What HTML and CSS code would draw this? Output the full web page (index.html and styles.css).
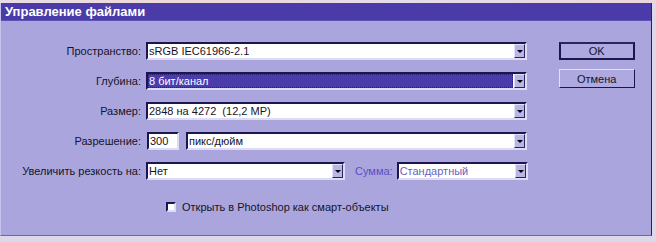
FILE: index.html
```html
<!DOCTYPE html>
<html lang="ru">
<head>
    <meta charset="UTF-8">
    <title>Управление файлами</title>
    <link rel="stylesheet" href="styles.css">
</head>
<body>
    <div class="topstrip"></div>
    <div class="window">
        <div class="titlebar">Управление файлами</div>
        <div class="content">
            <div class="form">
                <div class="row">
                    <span class="label">Пространство:</span>
                    <div class="select wide"><span class="value">sRGB IEC61966-2.1</span><span class="arrow"></span></div>
                </div>
                <div class="row">
                    <span class="label">Глубина:</span>
                    <div class="select wide active"><span class="value">8 бит/канал</span><span class="arrow"></span></div>
                </div>
                <div class="row">
                    <span class="label">Размер:</span>
                    <div class="select wide"><span class="value">2848 на 4272&nbsp; (12,2 MP)</span><span class="arrow"></span></div>
                </div>
                <div class="row">
                    <span class="label">Разрешение:</span>
                    <div class="field">300</div>
                    <div class="select units"><span class="value">пикс/дюйм</span><span class="arrow"></span></div>
                </div>
                <div class="row">
                    <span class="label">Увеличить резкость на:</span>
                    <div class="select sharpen"><span class="value">Нет</span><span class="arrow"></span></div>
                    <span class="label-dim">Сумма:</span>
                    <div class="select amount disabled"><span class="value">Стандартный</span><span class="arrow"></span></div>
                </div>
                <div class="check-row">
                    <span class="checkbox"></span>
                    <span>Открыть в Photoshop как смарт-объекты</span>
                </div>
            </div>
            <div class="buttons">
                <button class="btn default">OK</button>
                <button class="btn">Отмена</button>
            </div>
        </div>
    </div>
</body>
</html>
```

FILE: styles.css
```css
body { margin: 0; padding: 0; background: #dcd8ea; font-family: "Liberation Sans", Arial, sans-serif; font-size: 11px; color: #15132a; }
.topstrip { height: 3px; background: linear-gradient(90deg, #e8dce6 0%, #f0d8d8 30%, #e4dcec 60%, #ecd6dc 100%); }
.window { width: 652px; height: 233px; background: #aaa6dd; border-left: 1px solid #c6c3ec; border-right: 1px solid #2a2260; border-bottom: 1px solid #6c66b0; box-sizing: border-box; }
.titlebar { height: 18px; line-height: 18px; background: #4a3ba9; border-bottom: 1px solid #5e52b6; box-sizing: border-box; color: #fff; font-family: "Liberation Sans", Arial, sans-serif; font-weight: bold; font-size: 13px; padding-left: 4px; }
.content { display: flex; padding-top: 21px; }
.form { display: flex; flex-direction: column; gap: 12px; }
.row { display: flex; align-items: center; height: 18px; }
.label { width: 140px; margin-right: 5px; text-align: right; }
.label-dim { color: #5a4ec4; margin: 0 4px 0 10px; }
.select, .field { height: 18px; box-sizing: border-box; background: #fff; border: 2px solid; border-color: #1c1650 #dedcf4 #dedcf4 #1c1650; display: flex; align-items: center; }
.select .value { flex: 1; padding-left: 1px; white-space: nowrap; overflow: hidden; }
.select .arrow { width: 11px; height: 14px; box-sizing: border-box; background: #b9b5e6; border: 1px solid; border-color: #e4e2f8 #2a2460 #2a2460 #e4e2f8; position: relative; }
.select .arrow::after { content: ""; position: absolute; left: 2px; top: 5px; border-left: 3px solid transparent; border-right: 3px solid transparent; border-top: 3px solid #000; }
.wide { width: 381px; }
.active .value { background: #4b3cab; color: #fff; height: 14px; line-height: 14px; margin-right: 1px; outline: 1px dotted #2a2070; outline-offset: -1px; }
.field { width: 32px; padding-left: 1px; margin-left: 1px; }
.units { width: 341px; margin-left: 7px; }
.sharpen { width: 199px; }
.amount { width: 131px; }
.disabled .value { color: #6a60c0; }
.check-row { display: flex; align-items: center; height: 14px; margin-top: 8px; padding-left: 165px; gap: 6px; }
.checkbox { width: 10px; height: 10px; box-sizing: border-box; background: #fff; border: 2px solid; border-color: #1c1650 #dedcf4 #dedcf4 #1c1650; }
.buttons { display: flex; flex-direction: column; gap: 9px; margin-left: 31px; }
.btn { width: 76px; height: 19px; padding: 0; font-family: "Liberation Sans", Arial, sans-serif; font-size: 11px; color: #15132a; background: #aeaae0; border: 1px solid; border-color: #e2e0f6 #1c1650 #1c1650 #e2e0f6; box-sizing: border-box; }
.btn.default { height: 18px; border: 2px solid #1c1650; border-top-color: #2a2460; }
```
